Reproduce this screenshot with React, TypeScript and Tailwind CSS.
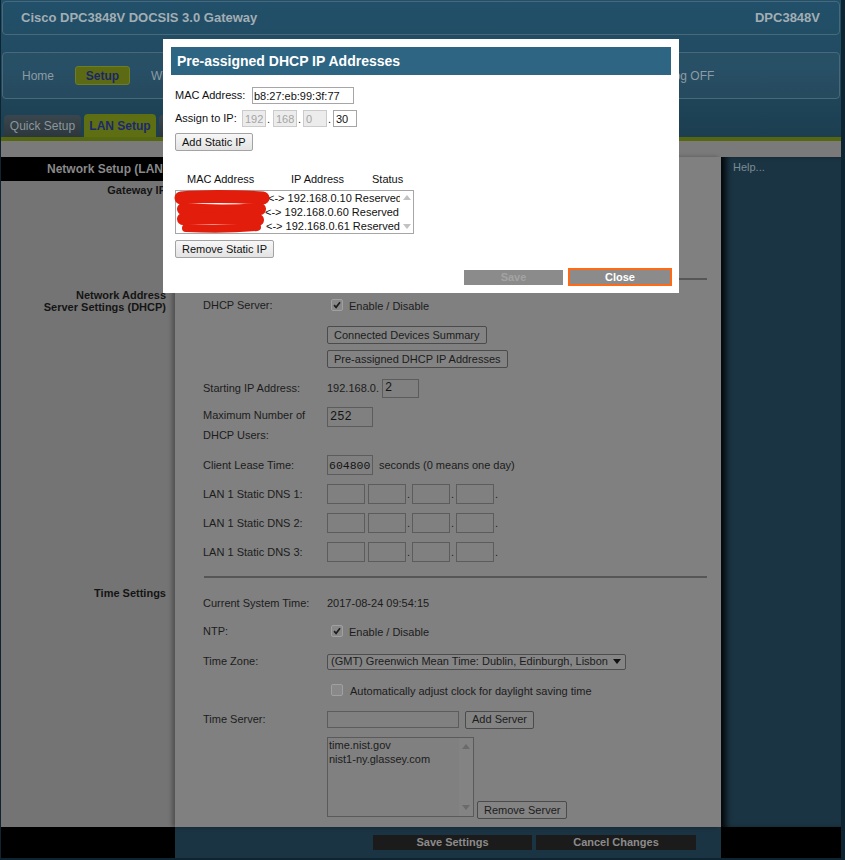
import React from 'react';

type RowProps = { label: React.ReactNode; className?: string; children?: React.ReactNode };

// one label/value line of the form (label column is 124px wide)
const Row = ({ label, className = '', children }: RowProps) => (
  <div className={`flex items-center ${className}`}>
    <span className="w-[124px] shrink-0">{label}</span>
    {children}
  </div>
);

const Check = ({ checked }: { checked?: boolean }) => (
  <span className="ml-[4px] flex h-[12px] w-[12px] shrink-0 items-center justify-center rounded-[2px] border border-[#a0a0a0] bg-[#898989]">
    {checked && (
      <svg viewBox="0 0 12 12" className="h-[10px] w-[10px]">
        <path d="M2.5 6.2 L4.9 8.8 L9.6 2.6" fill="none" stroke="#1e1e1e" strokeWidth="2" />
      </svg>
    )}
  </span>
);

const Btn = ({ children, className = '' }: { children: React.ReactNode; className?: string }) => (
  <button className={`h-[18px] rounded-[2px] border border-[#4b4b4b] bg-[#838383] px-[6px] text-[11px] leading-none text-[#1c1c1c] ${className}`}>
    {children}
  </button>
);

const Arrow = ({ up, color }: { up?: boolean; color: string }) => (
  <svg viewBox="0 0 8 5" className="h-[5px] w-[8px]">
    <path d={up ? 'M0 5 L4 0 L8 5 Z' : 'M0 0 L8 0 L4 5 Z'} fill={color} />
  </svg>
);

const dnsBox = 'h-[20px] w-[38px] border border-[#5c5c5c] bg-transparent';

const DnsRow = ({ n }: { n: number }) => (
  <Row label={`LAN 1 Static DNS ${n}:`} className="mt-[9px] h-[20px]">
    <input readOnly className={dnsBox} />
    <input readOnly className={`ml-[3px] ${dnsBox}`} />
    <span className="w-[6px] pl-[1px] leading-[22px]">.</span>
    <input readOnly className={dnsBox} />
    <span className="w-[6px] pl-[1px] leading-[22px]">.</span>
    <input readOnly className={dnsBox} />
    <span className="w-[6px] pl-[1px] leading-[22px]">.</span>
  </Row>
);

// MAC column is blanked out (redacted in the shot); the pad keeps the arrows where they sit
const reserved = [
  { pad: 'w-[91px]', ip: '192.168.0.10' },
  { pad: 'w-[88px]', ip: '192.168.0.60' },
  { pad: 'w-[89px]', ip: '192.168.0.61' },
];

const ipPart = 'h-[17px] w-[24px] border px-[2px] text-[11px]';

export default function App() {
  return (
    <div className="relative h-[860px] w-[845px] overflow-hidden bg-[#0e2531] font-['Liberation_Sans',Arial,sans-serif]">
      <div className="ml-[1px] flex h-[858px] w-[840px] flex-col">
        {/* top: title, main nav, sub tabs */}
        <div className="bg-gradient-to-b from-[#22506a] via-[#214a60] to-[#1c3e50] pt-[1px]">
          <div className="mx-[1px] flex h-[34px] items-center justify-between rounded-[4px] border border-[#48697a] pl-[18px] pr-[19px] text-[13px] font-bold text-[#a2aeb4]">
            <span>Cisco DPC3848V DOCSIS 3.0 Gateway</span>
            <span>DPC3848V</span>
          </div>
          <div className="mx-[1px] mt-[17px] flex h-[47px] items-center rounded-[4px] border border-[#48697a] bg-white/[0.03] pl-[19px] text-[12px] text-[#8d9ca4]">
            <div className="flex w-[645px] items-center gap-[21px] overflow-hidden whitespace-nowrap">
              <span>Home</span>
              <span className="flex h-[19px] w-[55px] shrink-0 items-center justify-center rounded-[3px] border border-[#6e7d22] bg-[#5c6b13] font-bold text-[#1b2767]">
                Setup
              </span>
              <span>Wireless</span>
              <span>Security</span>
              <span>Access Restrictions</span>
              <span>Applications &amp; Gaming</span>
              <span>Administration</span>
            </div>
            <span>Log OFF</span>
          </div>
          <div className="mt-[15px] flex h-[23px] items-end gap-[3px] pl-[3px] text-[12px]">
            <div className="flex h-[22px] w-[77px] items-center justify-center rounded-t-[4px] bg-gradient-to-b from-[#3a464d] to-[#2c373d] text-[#8b969c]">
              Quick Setup
            </div>
            <div className="flex h-[23px] w-[72px] items-center justify-center rounded-t-[4px] bg-[#5d6e13] font-bold text-[#1c2870]">
              LAN Setup
            </div>
            <div className="flex h-[22px] w-[60px] items-center justify-center rounded-t-[4px] bg-gradient-to-b from-[#3a464d] to-[#2c373d] text-[#8b969c]">
              DDNS
            </div>
          </div>
        </div>
        <div className="h-[4px] bg-[#56680f]" />
        <div className="h-[16px] bg-[#7a7a7a]" />

        {/* columns */}
        <div className="flex h-[670px]">
          <div className="w-[174px] bg-[#747474] text-right text-[11px] font-bold text-[#141414]">
            <div className="h-[24px] whitespace-nowrap bg-black pl-[46px] text-left text-[12px] leading-[24px] text-[#898989]">
              Network Setup (LAN)
            </div>
            <div className="mt-[3px] pr-[9px] leading-[13px]">Gateway IP</div>
            <div className="mt-[92px] pr-[9px] leading-[12px]">
              Network Address
              <br />
              Server Settings (DHCP)
            </div>
            <div className="mt-[274px] pr-[9px] leading-[12px]">Time Settings</div>
          </div>

          <div className="relative z-[1] w-[546px] bg-[#808080] pl-[28px] pr-[14px] text-[11px] text-[#1c1c1c] shadow-[-3px_0_4px_rgba(0,0,0,0.3)]">
            <div className="h-[121px] pt-[26px]">
              <Row label="Local IP Address:" className="h-[18px]">192.168.0.1</Row>
              <Row label="Subnet Mask:" className="mt-[10px] h-[18px]">255.255.255.0</Row>
            </div>
            <div className="ml-[1px] h-[2px] bg-[#565656]" />

            <Row label="DHCP Server:" className="mt-[16px] h-[18px]">
              <Check checked />
              <span className="ml-[6px] mt-[3px]">Enable / Disable</span>
            </Row>
            <div className="ml-[124px] mt-[12px] flex flex-col items-start gap-[6px]">
              <Btn>Connected Devices Summary</Btn>
              <Btn>Pre-assigned DHCP IP Addresses</Btn>
            </div>
            <Row label="Starting IP Address:" className="mt-[10px] h-[20px]">
              <span>192.168.0.</span>
              <input
                readOnly
                defaultValue="2"
                className="ml-[3px] h-[19px] w-[37px] border border-[#5c5c5c] bg-transparent px-[2px] font-['Liberation_Mono',monospace] text-[12px] text-[#141414]"
              />
            </Row>
            <div className="mt-[7px] flex items-start">
              <span className="w-[124px] shrink-0 leading-[20px]">
                Maximum Number of
                <br />
                DHCP Users:
              </span>
              <input
                readOnly
                defaultValue="252"
                className="mt-[2px] h-[20px] w-[46px] border border-[#5c5c5c] bg-transparent px-[2px] font-['Liberation_Mono',monospace] text-[12px] text-[#141414]"
              />
            </div>
            <Row label="Client Lease Time:" className="mt-[10px] h-[20px]">
              <input
                readOnly
                defaultValue="604800"
                className="h-[20px] w-[46px] border border-[#5c5c5c] bg-transparent pl-[1px] pr-0 font-['Liberation_Mono',monospace] text-[11.5px] text-[#141414]"
              />
              <span className="ml-[6px]">seconds (0 means one day)</span>
            </Row>
            <DnsRow n={1} />
            <DnsRow n={2} />
            <DnsRow n={3} />
            <div className="ml-[1px] mt-[14px] h-[2px] bg-[#565656]" />

            <Row label="Current System Time:" className="mt-[16px] h-[18px]">2017-08-24 09:54:15</Row>
            <Row label="NTP:" className="mt-[10px] h-[18px]">
              <Check checked />
              <span className="ml-[6px] mt-[3px]">Enable / Disable</span>
            </Row>
            <Row label="Time Zone:" className="mt-[13px] h-[17px]">
              <div className="flex h-[16px] w-[299px] items-center justify-between rounded-[2px] border border-[#4e4e4e] bg-[#858585] pl-[3px] pr-[4px]">
                <span>(GMT) Greenwich Mean Time: Dublin, Edinburgh, Lisbon</span>
                <Arrow color="#111" />
              </div>
            </Row>
            <div className="mt-[12px] flex h-[16px] items-center pl-[124px]">
              <Check />
              <span className="ml-[7px] mt-[2px]">Automatically adjust clock for daylight saving time</span>
            </div>
            <Row label="Time Server:" className="mt-[13px] h-[17px]">
              <input readOnly className="h-[17px] w-[132px] border border-[#5c5c5c] bg-transparent" />
              <Btn className="ml-[6px] h-[17px]">Add Server</Btn>
            </Row>
            <div className="mt-[9px] flex items-end pl-[124px]">
              <div className="flex h-[80px] w-[147px] border border-[#5a5a5a]">
                <div className="flex-1 pl-[1px] leading-[14px]">
                  <div>time.nist.gov</div>
                  <div>nist1-ny.glassey.com</div>
                </div>
                <div className="flex w-[14px] flex-col items-center justify-between bg-[#838383] py-[6px]">
                  <Arrow up color="#6b6b6b" />
                  <Arrow color="#6b6b6b" />
                </div>
              </div>
              <Btn className="mb-[-2px] ml-[3px]">Remove Server</Btn>
            </div>
          </div>

          <div className="w-[120px] bg-[#1b3443] pl-[12px] pt-[2px] text-[11px] text-[#7b8b93] shadow-[inset_8px_0_6px_-3px_rgba(0,0,0,0.85)]">
            Help...
          </div>
        </div>

        {/* bottom action bar */}
        <div className="flex h-[31px]">
          <div className="w-[174px] bg-black" />
          <div className="flex w-[546px] gap-[4px] bg-[#1b3443] pl-[198px] pt-[8px] text-[11px] font-bold text-[#8b8b8b]">
            <button className="h-[15px] w-[159px] bg-[#1b1b1b] leading-none">Save Settings</button>
            <button className="h-[15px] w-[160px] bg-[#1b1b1b] leading-none">Cancel Changes</button>
          </div>
          <div className="w-[120px] bg-black" />
        </div>
      </div>

      {/* dialog */}
      <div className="absolute left-[163px] top-[39px] z-10 h-[254px] w-[516px] bg-white px-[8px] pt-[8px] text-[11px] text-[#111]">
        <div className="flex h-[28px] items-center bg-[#2e6583] pl-[6px] text-[14px] font-bold text-white">
          Pre-assigned DHCP IP Addresses
        </div>
        <div className="pl-[4px]">
          <div className="mt-[12px] flex h-[17px] items-center">
            <span className="w-[77px]">MAC Address:</span>
            <input
              readOnly
              defaultValue="b8:27:eb:99:3f:77"
              className="h-[17px] w-[102px] border border-[#a6a6a6] px-[1px] text-[11px] text-[#111]"
            />
          </div>
          <div className="mt-[6px] flex h-[17px] items-center">
            <span className="w-[67px]">Assign to IP:</span>
            <input readOnly disabled defaultValue="192" className={`${ipPart} border-[#cbcbcb] bg-[#ececec] text-[#a5a5a5]`} />
            <span className="w-[7px] pl-[1px] leading-[20px]">.</span>
            <input readOnly disabled defaultValue="168" className={`${ipPart} border-[#cbcbcb] bg-[#ececec] text-[#a5a5a5]`} />
            <span className="w-[6px] pl-[1px] leading-[20px]">.</span>
            <input readOnly disabled defaultValue="0" className={`${ipPart} border-[#cbcbcb] bg-[#ececec] text-[#a5a5a5]`} />
            <span className="w-[6px] pl-[1px] leading-[20px]">.</span>
            <input readOnly defaultValue="30" className={`${ipPart} border-[#a6a6a6] bg-white text-[#111]`} />
          </div>
          <button className="mt-[6px] h-[18px] rounded-[2px] border border-[#a3a3a3] bg-gradient-to-b from-[#f7f7f7] to-[#e3e3e3] px-[6px] leading-none">
            Add Static IP
          </button>
          <div className="mt-[21px] flex h-[14px] items-center">
            <span className="w-[116px] pl-[12px]">MAC Address</span>
            <span className="w-[81px]">IP Address</span>
            <span>Status</span>
          </div>
          <div className="relative mt-[4px] flex h-[44px] w-[239px] border border-[#a6a6a6]">
            <div className="flex-1 overflow-hidden whitespace-nowrap pl-[1px] leading-[14px]">
              {reserved.map((r) => (
                <div key={r.ip} className="flex">
                  <span className={`shrink-0 ${r.pad}`} />
                  <span>&lt;-&gt; {r.ip} Reserved</span>
                </div>
              ))}
            </div>
            <div className="flex w-[13px] flex-col items-center justify-between py-[4px]">
              <Arrow up color="#c2c2c2" />
              <Arrow color="#c2c2c2" />
            </div>
            {/* redaction scribble over the MAC column */}
            <svg className="absolute left-[-3px] top-[-2px] h-[48px] w-[98px] overflow-visible" viewBox="0 0 98 48">
              <g fill="none" stroke="#e21d0c" strokeLinecap="round">
                <path d="M8 9 Q40 6 90 9" strokeWidth="13" />
                <path d="M10 20 Q50 23 87 20" strokeWidth="12" />
                <path d="M10 30 Q45 28 85 31" strokeWidth="12" />
                <path d="M13 39 Q50 41 84 38" strokeWidth="8" />
              </g>
            </svg>
          </div>
          <button className="mt-[6px] h-[18px] rounded-[2px] border border-[#a3a3a3] bg-gradient-to-b from-[#f7f7f7] to-[#e3e3e3] px-[6px] leading-none">
            Remove Static IP
          </button>
          <div className="mr-[-1px] mt-[10px] flex items-center justify-end gap-[5px] font-bold">
            <button className="h-[15px] w-[99px] bg-[#8b8b8b] leading-none text-[#a3a3a3]">Save</button>
            <button className="h-[18px] w-[104px] border-2 border-[#ff6a17] bg-[#8b8b8b] leading-none text-white">Close</button>
          </div>
        </div>
      </div>
    </div>
  );
}
